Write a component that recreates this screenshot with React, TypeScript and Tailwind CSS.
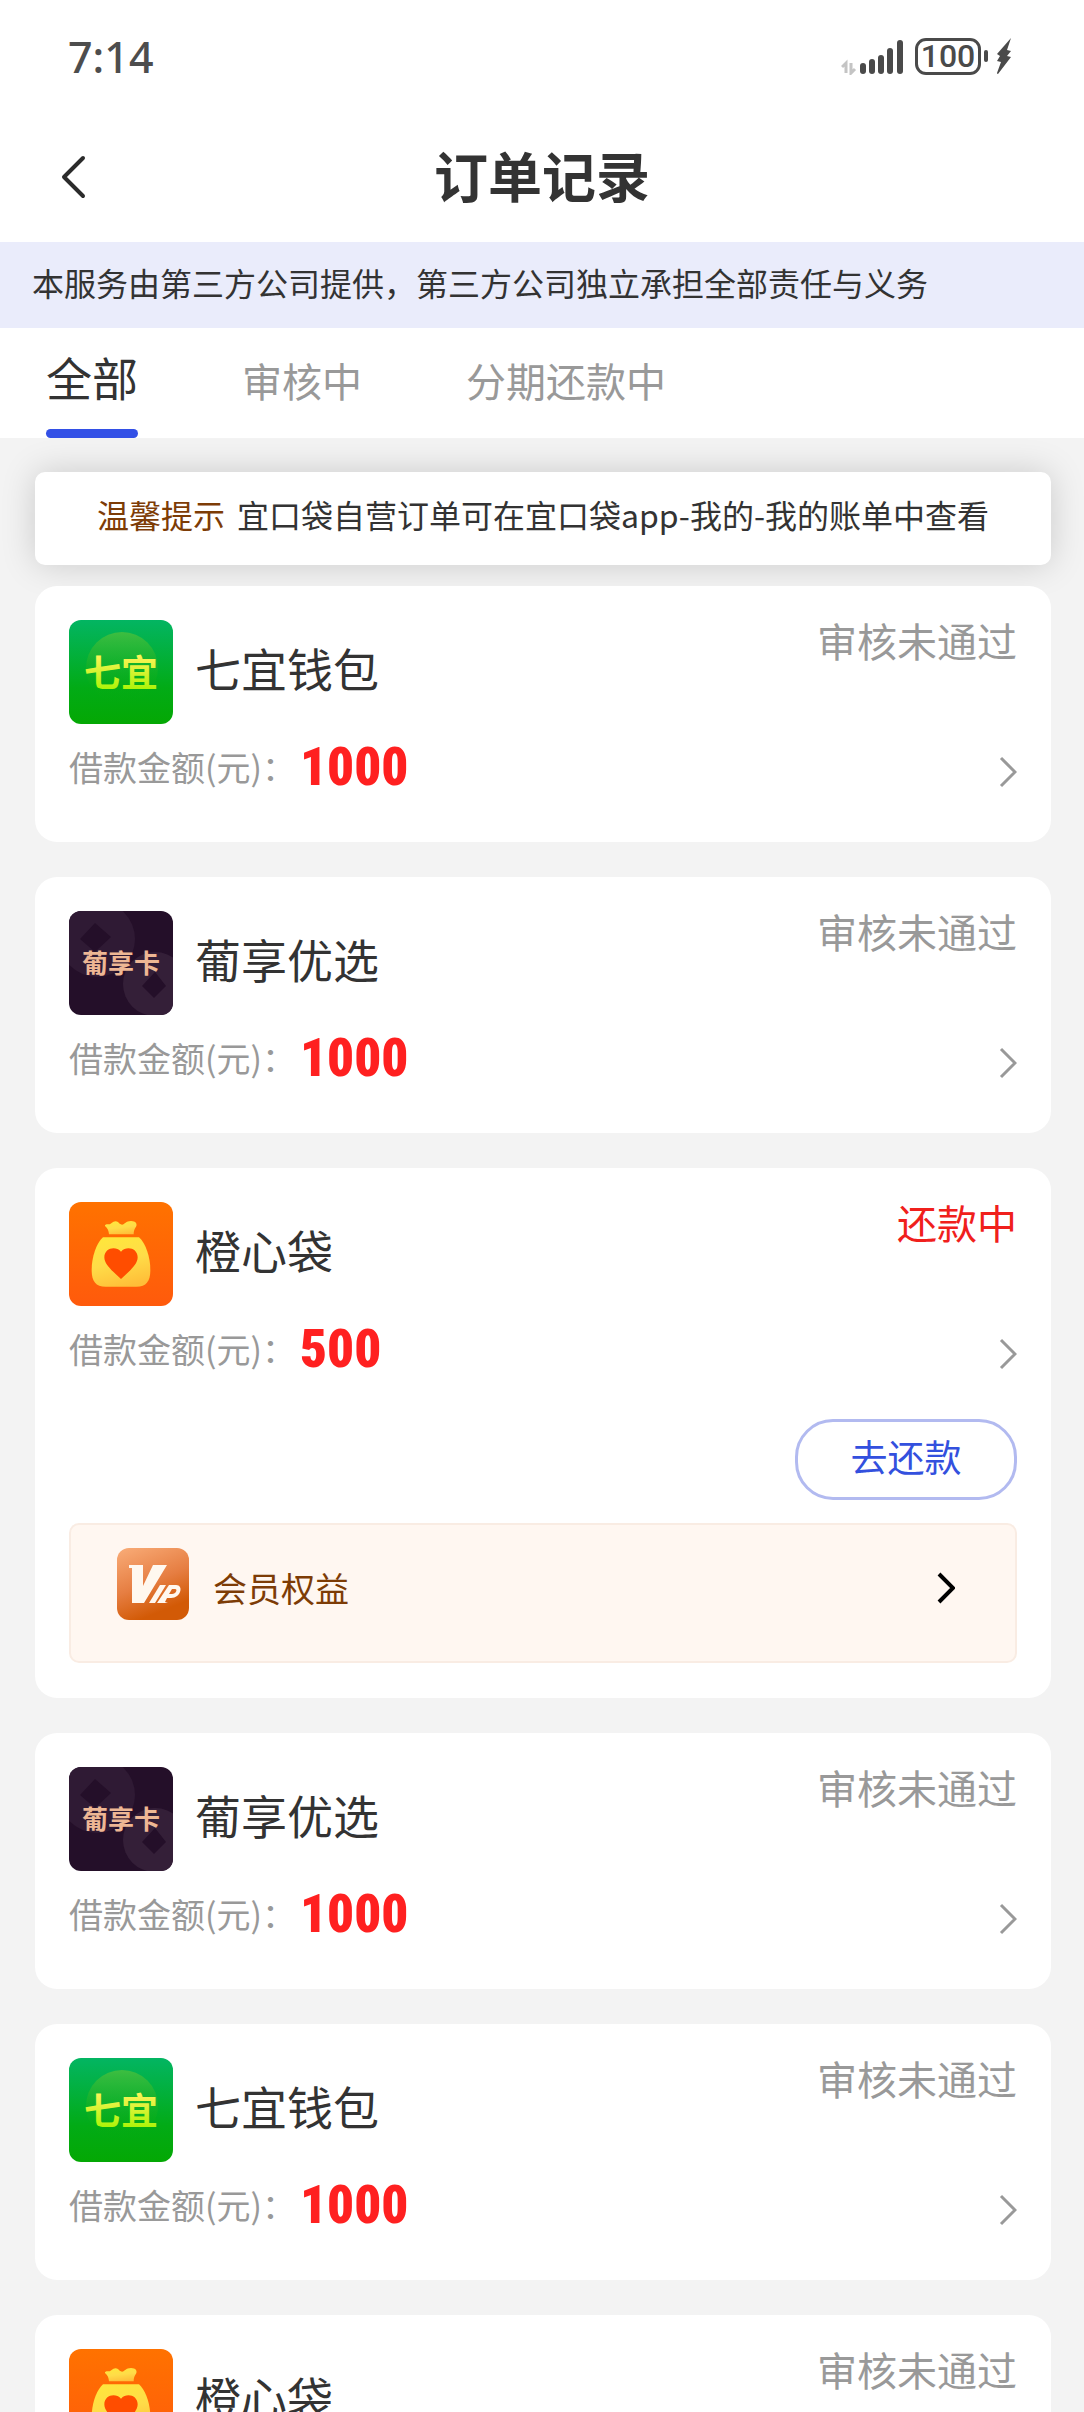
import React from 'react';

type Brand = 'qiyi' | 'puxiang' | 'chengxin';

interface Order {
  id: number;
  brand: Brand;
  name: string;
  amount: number;
  status: string;
  repaying?: boolean;
}

const orders: Order[] = [
  { id: 1, brand: 'qiyi', name: '七宜钱包', amount: 1000, status: '审核未通过' },
  { id: 2, brand: 'puxiang', name: '葡享优选', amount: 1000, status: '审核未通过' },
  { id: 3, brand: 'chengxin', name: '橙心袋', amount: 500, status: '还款中', repaying: true },
  { id: 4, brand: 'puxiang', name: '葡享优选', amount: 1000, status: '审核未通过' },
  { id: 5, brand: 'qiyi', name: '七宜钱包', amount: 1000, status: '审核未通过' },
  { id: 6, brand: 'chengxin', name: '橙心袋', amount: 1000, status: '审核未通过' },
];

const tabs = ['全部', '审核中', '分期还款中'];

function StatusBar() {
  return (
    <div className="flex h-28 shrink-0 items-center justify-between pl-[68px] pr-[72px]">
      <span className="font-['Noto_Sans'] text-[43px] font-medium leading-none text-[#4d4d4d]">7:14</span>
      <div className="flex items-center">
        {/* Signal */}
        <svg width="64" height="38" viewBox="0 0 64 38" fill="#4a4a4a">
          <path d="M5 36V26L1 30M10 26v10l4-4" fill="none" stroke="#c4c4c4" strokeWidth="3" />
          <rect x="19" y="26" width="6" height="11" rx="3" />
          <rect x="28" y="22" width="6" height="15" rx="3" />
          <rect x="37" y="18" width="6" height="19" rx="3" />
          <rect x="46" y="11" width="6" height="26" rx="3" />
          <rect x="56" y="3" width="6" height="34" rx="3" />
        </svg>
        {/* Battery */}
        <div className="ml-2.5 flex h-[37px] w-[66px] items-center justify-center rounded-[11px] border-[3px] border-[#4a4a4a] font-[Roboto] text-[32px] font-medium leading-none text-[#4a4a4a]">
          100
        </div>
        <div className="ml-[3px] h-3 w-1 rounded-full bg-[#4a4a4a]" />
        <svg className="ml-2" width="16" height="38" viewBox="0 0 16 38" fill="#4a4a4a">
          <path d="M15 1 1 17l3 2-3 5 4 1-4 11q0 1 1 1l13-17-4-1 4-5-4-1 4-12z" />
        </svg>
      </div>
    </div>
  );
}

function Chevron({ className, stroke, width }: { className?: string; stroke: string; width: number }) {
  return (
    <svg className={className} width="18" height="32" viewBox="0 0 18 32" fill="none" stroke={stroke} strokeWidth={width}>
      <path d="M2 2l14 14L2 30" />
    </svg>
  );
}

function BrandLogo({ brand }: { brand: Brand }) {
  if (brand === 'qiyi') {
    return (
      <svg className="size-[104px] rounded-xl" viewBox="0 0 104 104" aria-hidden="true">
        <defs>
          <linearGradient id="qiyi-bg" x1="0" y1="0" x2="0" y2="1">
            <stop offset="0" stopColor="#03b562" />
            <stop offset="0.65" stopColor="#02ab16" />
            <stop offset="1" stopColor="#04a804" />
          </linearGradient>
          <linearGradient id="qiyi-ball" x1="0" y1="0" x2="0" y2="1">
            <stop offset="0" stopColor="#4cc03c" stopOpacity="0.8" />
            <stop offset="0.8" stopColor="#12ac10" stopOpacity="0.1" />
            <stop offset="1" stopColor="#12ac10" stopOpacity="0" />
          </linearGradient>
          <linearGradient id="qiyi-text" x1="0" y1="0" x2="0" y2="1">
            <stop offset="0.2" stopColor="#fff35a" />
            <stop offset="0.9" stopColor="#a4f400" />
          </linearGradient>
        </defs>
        <rect width="104" height="104" fill="url(#qiyi-bg)" />
        <circle cx="53" cy="48" r="36" fill="url(#qiyi-ball)" />
        <text x="52" y="67" textAnchor="middle" fontSize="37" fontWeight="700" fill="url(#qiyi-text)">七宜</text>
      </svg>
    );
  }
  if (brand === 'puxiang') {
    return (
      <svg className="size-[104px] rounded-xl" viewBox="0 0 104 104" aria-hidden="true">
        <rect width="104" height="104" fill="#240f29" />
        <circle cx="28" cy="28" r="38" fill="#2f1a34" />
        <path d="M26 12 42 26 26 41 11 28z" fill="#240f29" />
        <circle cx="86" cy="73" r="32" fill="#341f38" />
        <path d="M86 61 97 75 85 87 73 75z" fill="#240f29" />
        <g fontSize="26" fontWeight="700" fill="#eeb794" textAnchor="middle">
          <text x="26" y="62">葡</text>
          <text x="52" y="62">享</text>
          <text x="78" y="62">卡</text>
        </g>
      </svg>
    );
  }
  return (
    <svg className="size-[104px] rounded-xl" viewBox="0 0 312 312" aria-hidden="true">
      <defs>
        <linearGradient id="bag-bg" x1="0" y1="0" x2="0" y2="1">
          <stop offset="0" stopColor="#ff7200" />
          <stop offset="1" stopColor="#ff5a0c" />
        </linearGradient>
        <linearGradient id="bag-body" x1="0.3" y1="0" x2="0.6" y2="1">
          <stop offset="0" stopColor="#ffe63c" />
          <stop offset="0.5" stopColor="#ffdc48" />
          <stop offset="1" stopColor="#ffbe38" />
        </linearGradient>
      </defs>
      <rect width="312" height="312" fill="url(#bag-bg)" />
      <path
        d="M108 72c-2-4 6-6 10-5 10 1 11-9 22-9 9 0 10 9 19 10 9-1 11-11 27-11 14 0 20 9 15 17-5 7-7 14-7 23h-74c-1-12-4-18-12-25z"
        fill="url(#bag-body)"
      />
      <path
        d="M102 106h108c20 18 34 59 34 98 0 34-12 50-42 50h-92c-30 0-42-16-42-50 0-39 14-80 34-98z"
        fill="url(#bag-body)"
      />
      <path d="M156 231c-22-21-50-42-50-65 0-27 33-36 50-17 17-19 50-10 50 17 0 23-28 44-50 65z" fill="#ff4d00" />
    </svg>
  );
}

function VipIcon() {
  return (
    <svg width="72" height="72" viewBox="0 0 72 72" aria-hidden="true">
      <defs>
        <linearGradient id="vip-bg" x1="0.2" y1="0" x2="0.6" y2="1">
          <stop offset="0" stopColor="#f7a772" />
          <stop offset="0.5" stopColor="#e67e42" />
          <stop offset="0.9" stopColor="#d25a06" />
        </linearGradient>
      </defs>
      <rect width="72" height="72" rx="12" fill="url(#vip-bg)" />
      {/* Slanted emblem */}
      <path d="M12 17h14v21l10-21h14L27 55H15V20h-3z" fill="#fff8ef" />
      <path d="M43 37h6L38 55h-6z" fill="#fff8ef" />
      <path
        fillRule="evenodd"
        d="M52 37h7c8 0 5 13-5 13h-4l-2 4 3 1H40zM55 41l-3 5h3c4 0 6-5 3-5z"
        fill="#fff8ef"
      />
    </svg>
  );
}

function OrderCard({ order }: { order: Order }) {
  return (
    <article className={`shrink-0 rounded-[22px] bg-white px-[34px] pt-[34px] ${order.repaying ? 'pb-[35px]' : 'pb-7'}`}>
      <div className="flex">
        <BrandLogo brand={order.brand} />
        <h2 className="ml-[22px] flex-1 pt-3 text-[46px] leading-[70px] text-[#333]">{order.name}</h2>
        <span className={`text-[40px] leading-[40px] ${order.repaying ? 'text-[#f0201c]' : 'text-[#999]'}`}>{order.status}</span>
      </div>
      <div className="flex h-[90px] items-center">
        <span className="pb-1 text-[34px] leading-none text-[#999]">借款金额(元)：</span>
        <span className="ml-1 pb-1 font-['Roboto_Condensed',sans-serif] text-[53px] font-black leading-none text-[#ff2020]">
          {order.amount}
        </span>
        <button type="button" aria-label="查看详情" className="ml-auto pt-1.5">
          <Chevron stroke="#999" width={3} />
        </button>
      </div>
      {order.repaying && (
        <>
          <div className="mt-[23px] flex justify-end">
            <button type="button" className="h-[81px] w-[222px] rounded-[38px] border-[3px] border-[#b2baf0] pb-1.5 text-[37px] leading-none text-[#3350de]">
              去还款
            </button>
          </div>
          <a href="#vip" className="mt-[23px] flex h-[140px] items-start rounded-[10px] border-2 border-[#f9ece3] bg-[#fff7f1] pl-[46px] pr-[60px] pt-[23px]">
            <VipIcon />
            <span className="ml-6 pt-2.5 text-[34px] leading-[60px] text-[#7d3c06]">会员权益</span>
            <Chevron className="ml-auto mt-6" stroke="#000" width={4} />
          </a>
        </>
      )}
    </article>
  );
}

export default function App() {
  return (
    <div className="flex h-screen flex-col bg-[#f3f3f3] font-['Noto_Sans_CJK_SC',sans-serif]" lang="zh-CN">
      <header className="shrink-0 bg-white">
        <StatusBar />
        <div className="grid h-[130px] grid-cols-[1fr_auto_1fr] items-center px-[60px]">
          <button type="button" aria-label="返回" className="justify-self-start">
            <svg width="26" height="44" viewBox="0 0 26 44" fill="none" stroke="#2b2b2b" strokeWidth="4" strokeLinecap="round" strokeLinejoin="round">
              <path d="M23 3 4 22l19 19" />
            </svg>
          </button>
          <h1 className="pb-1 text-[54px] font-bold leading-none text-[#333]">订单记录</h1>
        </div>
        <p className="bg-[#eaecfb] px-8 pb-[22px] pt-4 text-[32px] leading-[48px] text-[#333]">
          本服务由第三方公司提供，第三方公司独立承担全部责任与义务
        </p>
        <nav className="flex h-[110px] gap-[104px] px-[46px]">
          {tabs.map((tab, i) =>
            i === 0 ? (
              <button key={tab} type="button" className="flex flex-col justify-between pt-3.5 text-[46px] leading-[68px] text-[#333]">
                {tab}
                <span className="h-[9px] w-full rounded-full bg-[#3350e6]" />
              </button>
            ) : (
              <button key={tab} type="button" className="pb-1.5 text-[40px] leading-none text-[#999]">
                {tab}
              </button>
            )
          )}
        </nav>
      </header>

      <main className="flex min-h-0 flex-1 flex-col overflow-y-auto pl-[35px] pr-[33px] pt-[34px] [scrollbar-width:none]">
        <div className="shrink-0 rounded-[10px] bg-white pb-[27px] pt-[18px] text-center text-[32px] leading-[48px] text-[#333] shadow-[0_0_34px_rgba(0,0,0,0.17)]">
          <span className="mr-3 text-[#7d3c06]">温馨提示</span>
          宜口袋自营订单可在宜口袋app-我的-我的账单中查看
        </div>
        <div className="relative mt-[21px] flex flex-col gap-[35px]">
          {orders.map((order) => (
            <OrderCard key={order.id} order={order} />
          ))}
        </div>
      </main>
    </div>
  );
}
